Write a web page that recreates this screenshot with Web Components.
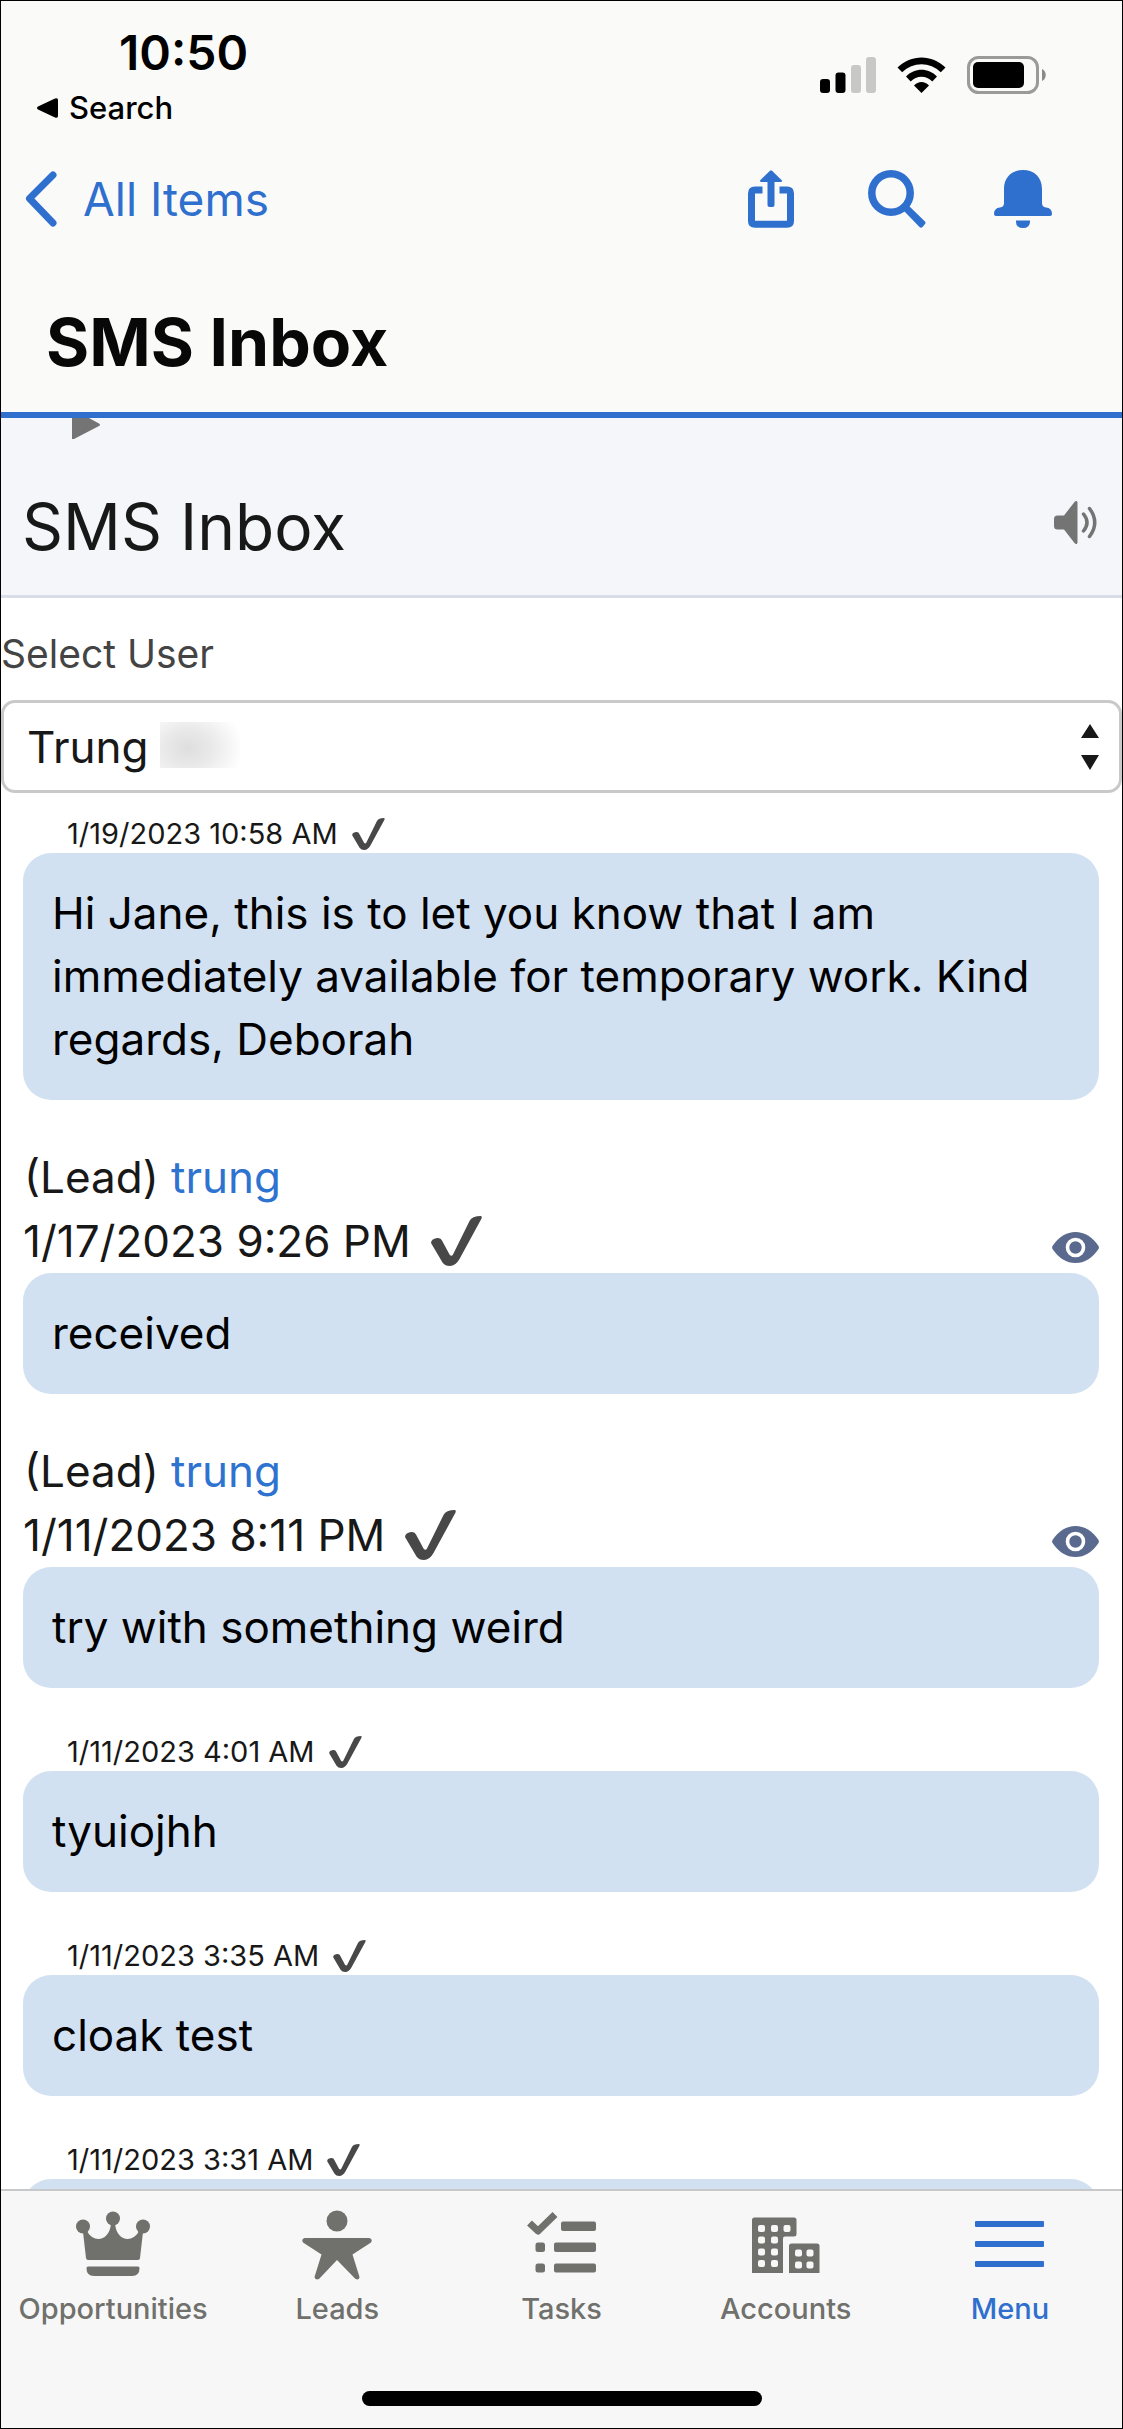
<!DOCTYPE html>
<html lang="en">
<head>
<meta charset="utf-8">
<meta name="viewport" content="width=device-width, initial-scale=1">
<title>SMS Inbox</title>
<style>
    body {
        margin: 0;
        font-family: Inter, "Liberation Sans", sans-serif;
        color: #181818;
    }
</style>
</head>
<body>
<phone-app>
    <app-header slot="header" heading="SMS Inbox" back="All Items" time="10:50"></app-header>

    <inbox-title>SMS Inbox</inbox-title>
    <user-picker label="Select User" value="Trung"></user-picker>

    <message-list>
        <sms-message date="1/19/2023 10:58 AM">Hi Jane, this is to let you know that I am immediately available for temporary work. Kind regards, Deborah</sms-message>
        <sms-message date="1/17/2023 9:26 PM" lead="trung">received</sms-message>
        <sms-message date="1/11/2023 8:11 PM" lead="trung">try with something weird</sms-message>
        <sms-message date="1/11/2023 4:01 AM">tyuiojhh</sms-message>
        <sms-message date="1/11/2023 3:35 AM">cloak test</sms-message>
        <sms-message date="1/11/2023 3:31 AM"></sms-message>
    </message-list>

    <tab-bar slot="footer">
        <tab-item icon="crown">Opportunities</tab-item>
        <tab-item icon="lead">Leads</tab-item>
        <tab-item icon="tasks">Tasks</tab-item>
        <tab-item icon="accounts">Accounts</tab-item>
        <tab-item icon="menu" active>Menu</tab-item>
    </tab-bar>
</phone-app>

<script>
const icons = {
    signal: `<svg width="56" height="36" viewBox="0 0 56 36">
        <rect y="22" width="10" height="14" rx="3"/><rect x="15.5" y="15.5" width="10" height="20.5" rx="3"/>
        <rect x="31" y="8" width="10" height="28" rx="3" fill="#c8c8c6"/><rect x="46" width="10" height="36" rx="3" fill="#c8c8c6"/>
    </svg>`,
    wifi: `<svg width="49" height="36" viewBox="0 0 49 36">
        <path d="M0.5 10.5C14-3 35-3 48.500 10.500L43.800 15.300C33 4.500 16 4.500 5.200 15.300Z"/>
        <path d="M9 19.500C17.500 10.500 31.500 10.500 40 19.500L35.300 24.500C29.500 18.200 19.500 18.200 13.700 24.500Z"/>
        <path d="M17 28.500C21 23.800 28 23.800 32 28.500L24.500 36Z"/>
    </svg>`,
    battery: `<svg width="79" height="38" viewBox="0 0 79 38">
        <rect x="1.500" y="1.500" width="69" height="35" rx="10" fill="none" stroke="#9a9a98" stroke-width="3"/>
        <rect x="6" y="6" width="51" height="26" rx="5"/><path d="M75 13C80 15 80 23 75 25Z" fill="#8a8a88"/>
    </svg>`,
    share: `<svg width="58" height="58" viewBox="0 0 58 58">
        <path d="M20.500 20H13Q9.500 20 9.500 23.500V51Q9.500 54.300 13 54.300H45Q48.500 54.300 48.500 51V23.500Q48.500 20 45 20H37.500" fill="none" stroke="currentColor" stroke-width="7" stroke-linecap="butt"/>
        <rect x="25.500" y="6" width="7" height="31" rx="2"/><path d="M28 .8Q29-.2 30 .8L40 10.500Q40.500 11.800 39 12H19Q17.500 11.800 18 10.500Z"/>
    </svg>`,
    search: `<svg width="58" height="58" viewBox="0 0 58 58">
        <circle cx="23" cy="23" r="19.200" fill="none" stroke="currentColor" stroke-width="7.500"/>
        <path d="M36 41L41 36L57 51.500Q58 53 57 54L54.500 57Q53 58.500 51.500 57Z"/>
    </svg>`,
    bell: `<svg width="58" height="58" viewBox="0 0 58 58">
        <path d="M10 19C10 7 18 0 29 0S48 7 48 19V33Q48 37 52 37.500Q58 38 58 44Q58 46 56 46H2Q0 46 0 44Q0 38 6 37.500Q10 37 10 33Z"/>
        <path d="M22 50.500H36Q36.500 58 29 58T22 50.500Z"/>
    </svg>`,
    back: `<svg width="32" height="56" viewBox="0 0 32 56">
        <path d="M28 4L4.500 27.500L28 52" fill="none" stroke="currentColor" stroke-width="7" stroke-linecap="round" stroke-linejoin="round"/>
    </svg>`,
    speaker: `<svg width="43" height="43" viewBox="0 0 43 43">
        <path d="M0 18Q0 14.500 3.500 14.500H10L20.500 1Q23.500-1.500 23.500 2V41Q23.500 44.500 20.500 42L10 28.500H3.500Q0 28.500 0 25Z"/>
        <path d="M29.500 13Q36.500 21.500 29.500 30M35.500 7.500Q46 21.500 35.500 35.500" fill="none" stroke="currentColor" stroke-width="3.500" stroke-linecap="round"/>
    </svg>`,
    eye: `<svg width="47" height="31" viewBox="0 0 47 31">
        <path d="M.5 17Q-.3 15.500.5 14Q10 0 23.500 0T46.500 14Q47.300 15.500 46.500 17Q37 31 23.500 31T.5 17Z"/>
        <circle cx="23.500" cy="15.500" r="8" fill="none" stroke="#fff" stroke-width="3.600"/>
    </svg>`,
    check: `<svg class="check" viewBox="0 0 51 50">
        <path d="M0 27Q0 23 6 22Q10 21.500 11 24.500L18.500 38.500Q20.500 41 22 38.500L38.500 5Q41 0 50 0Q51.500 1 50 3.500L28.500 43Q24.500 50 19 50Q14 50 11.500 46.500Z"/>
    </svg>`,
    crown: `<svg width="74" height="70" viewBox="0 0 74 70">
        <circle cx="7" cy="16.500" r="7"/><circle cx="37" cy="8.500" r="7"/><circle cx="67" cy="16.500" r="7"/>
        <path d="M7 22L11 21C17 33 33 32 35 14H39C41 32 57 33 63 21L67 22L64 48Q63.800 50 62 50H12Q10.300 50 10 48Z"/>
        <path d="M10.500 58Q10.500 56.500 12 56.500H62Q63.500 56.500 63.500 58Q63.500 66 56 66H18Q10.500 66 10.500 58Z"/>
    </svg>`,
    lead: `<svg width="70" height="70" viewBox="0 0 70 70">
        <circle cx="35" cy="11" r="10.500"/>
        <path d="M2.500 28H67.500Q71 29 69 32.500L50.500 44.500L57.500 67Q57.500 70.500 53.500 69L35 50L17 69Q13 70.500 12.500 67L19.500 44.500L1 32.500Q-1 29 2.500 28Z"/>
    </svg>`,
    tasks: `<svg width="70" height="70" viewBox="0 0 70 70">
        <path d="M3.500 13L12 21L29 4.500" fill="none" stroke="currentColor" stroke-width="7" stroke-linejoin="round"/>
        <rect x="35" y="11.500" width="35" height="9.500" rx="2"/><rect x="28" y="32.500" width="42" height="9.500" rx="2"/><rect x="28" y="53.500" width="42" height="9" rx="2"/>
        <rect x="9.500" y="32.500" width="9.500" height="9.500" rx="2.500"/><rect x="9.500" y="53.500" width="9.500" height="9" rx="2.500"/>
    </svg>`,
    accounts: `<svg width="68" height="70" viewBox="0 0 68 70">
        <path d="M0 63V10Q0 7.500 2.500 7.500H42Q44.500 7.500 44.500 10V24Q44.500 26.500 42 26.500H33Q31 26.500 31 28.500V63Z"/>
        <path d="M37 63V36Q37 33.500 39.500 33.500H65Q67.500 33.500 67.500 36V63Z"/>
        <g fill="#f7f7f7">
            <rect x="6" y="15" width="7" height="7" rx="2"/><rect x="19" y="15" width="7" height="7" rx="2"/><rect x="31.500" y="15" width="7" height="7" rx="2"/>
            <rect x="6" y="26.500" width="7" height="7" rx="2"/><rect x="19" y="26.500" width="7" height="7" rx="2"/>
            <rect x="6" y="38.500" width="7" height="7" rx="2"/><rect x="19" y="38.500" width="7" height="7" rx="2"/>
            <rect x="6" y="50" width="7" height="7" rx="2"/><rect x="19" y="50" width="7" height="7" rx="2"/>
            <rect x="43" y="39.500" width="7" height="7" rx="2"/><rect x="54.500" y="39.500" width="7" height="7" rx="2"/>
            <rect x="43" y="51.500" width="7" height="7" rx="2"/><rect x="54.500" y="51.500" width="7" height="7" rx="2"/>
        </g>
    </svg>`,
    menu: `<svg width="70" height="70" viewBox="0 0 70 70">
        <rect y="11" width="69" height="6" rx="1"/><rect y="31" width="69" height="6" rx="1"/><rect y="51" width="69" height="6" rx="1"/>
    </svg>`
};

// shared by every component
const base = `
    * { box-sizing: border-box; }
    svg { display: block; fill: currentColor; flex: none; }
    button { font: inherit; color: inherit; background: none; border: none; padding: 0; cursor: pointer; }
    a { color: inherit; text-decoration: none; }
`;

class BaseElement extends HTMLElement {
    constructor() {
        super();
        this.attachShadow({ mode: "open" });
    }

    connectedCallback() {
        this.shadowRoot.innerHTML = `<style>${base}${this.styles()}</style>${this.render()}`;
    }
}

class PhoneApp extends BaseElement {
    styles() {
        return `
            :host {
                box-sizing: border-box;
                display: flex;
                flex-direction: column;
                height: 100vh;
                border: 1px solid #000;
                background: #fff;
            }
            main { flex: 1; min-height: 0; overflow: hidden; }
        `;
    }

    render() {
        return `
            <slot name="header"></slot>
            <main><slot></slot></main>
            <slot name="footer"></slot>
        `;
    }
}

class AppHeader extends BaseElement {
    styles() {
        return `
            :host { display: block; background: #fafaf9; border-bottom: 6px solid #2f6fce; }
            .status {
                display: flex;
                justify-content: space-between;
                align-items: center;
                padding: 22px 76px 0 36px;
                color: #000;
            }
            .time { padding-left: 82px; font-size: 48px; font-weight: 600; line-height: 60px; }
            .return { display: flex; align-items: center; gap: 11px; margin-top: 7px; font-size: 31px; font-weight: 500; line-height: 36px; }
            .indicators { display: flex; align-items: center; gap: 21px; }
            nav {
                display: flex;
                justify-content: space-between;
                align-items: center;
                margin-top: 44px;
                padding: 0 70px 0 24px;
                color: #2f6fce;
            }
            .back { display: flex; align-items: center; gap: 26px; font-size: 46px; line-height: 58px; }
            .actions { display: flex; gap: 68px; }
            h1 { margin: 74px 0 0; padding: 0 45px 30px; font-size: 66px; font-weight: 700; line-height: 80px; color: #080808; }
        `;
    }

    render() {
        return `
            <div class="status">
                <div>
                    <div class="time">${this.getAttribute("time")}</div>
                    <a class="return" href="#search">
                        <svg width="21" height="20" viewBox="0 0 21 20"><path d="M1 8.500L18 .5Q21-.5 21 2V18Q21 20.500 18 19.500L1 11.500Q-1 10 1 8.500Z"/></svg>
                        Search
                    </a>
                </div>
                <div class="indicators">${icons.signal}${icons.wifi}${icons.battery}</div>
            </div>
            <nav>
                <a class="back" href="#items">${icons.back}${this.getAttribute("back")}</a>
                <div class="actions">
                    <button aria-label="Share">${icons.share}</button>
                    <button aria-label="Search">${icons.search}</button>
                    <button aria-label="Notifications">${icons.bell}</button>
                </div>
            </nav>
            <h1>${this.getAttribute("heading")}</h1>
        `;
    }
}

class InboxTitle extends BaseElement {
    styles() {
        return `
            :host { display: block; background: #f4f6fa; border-bottom: 3px solid #d9dde8; }
            .marker { margin-left: 71px; color: #747474; }
            .row { display: flex; justify-content: space-between; align-items: flex-start; padding: 48px 25px 28px 21px; }
            h2 { margin: 0; font-size: 64px; font-weight: 400; line-height: 80px; }
            button { padding: 14px 0; color: #747474; }
        `;
    }

    render() {
        return `
            <svg class="marker" width="28" height="21" viewBox="0 0 28 21"><path d="M0 0H17L27 5.500Q29 7 27 8L2 21H0Z"/></svg>
            <div class="row">
                <h2><slot></slot></h2>
                <button aria-label="Sound">${icons.speaker}</button>
            </div>
        `;
    }
}

class UserPicker extends BaseElement {
    styles() {
        return `
            :host { display: block; padding-top: 31px; }
            label { display: block; margin-bottom: 21px; font-size: 39px; line-height: 50px; color: #444; }
            .field { position: relative; }
            select {
                display: block;
                appearance: none;
                width: 100%;
                height: 93px;
                padding: 0 60px 0 23px;
                border: 3px solid #c9c9c9;
                border-radius: 14px;
                background: #fff;
                color: #181818;
                font: 400 44px Inter, "Liberation Sans", sans-serif;
            }
            .arrows { position: absolute; right: 23px; top: 50%; margin-top: -23px; pointer-events: none; }
            .masked {
                position: absolute;
                left: 159px;
                top: 22px;
                width: 80px;
                height: 46px;
                background: radial-gradient(ellipse 56px 44px at 28px 26px, #dedede, #eaeaea 45%, #fff);
                pointer-events: none;
            }
        `;
    }

    render() {
        return `
            <label for="user">${this.getAttribute("label")}</label>
            <div class="field">
                <select id="user"><option>${this.getAttribute("value")}</option></select>
                <span class="masked"></span>
                <svg class="arrows" width="18" height="46" viewBox="0 0 18 46"><path d="M9 0L18 14H0ZM0 31H18L9 46Z"/></svg>
            </div>
        `;
    }
}

class MessageList extends BaseElement {
    styles() {
        return `
            :host { display: flex; flex-direction: column; gap: 45px; padding: 22px 23px 0 22px; }
        `;
    }

    render() {
        return `<slot></slot>`;
    }
}

class SmsMessage extends BaseElement {
    styles() {
        return `
            :host { display: block; font-size: 44px; line-height: 64px; }
            .meta { display: flex; align-items: center; }
            .check { width: 51px; height: 50px; margin-left: 20px; color: #484848; }
            .view { margin-left: auto; padding-top: 12px; color: #5a6a8e; }
            .who { padding-left: 1px; }
            .who a { color: #2f73d0; }
            .sent { padding-left: 44px; font-size: 29px; line-height: 38px; }
            .sent .check { width: 33px; height: 32px; margin-left: 14px; }
            .bubble {
                min-height: 121px;
                padding: 29px;
                border-radius: 28px;
                background: #d2e1f1;
                line-height: 63px;
                color: #000;
            }
        `;
    }

    render() {
        const date = this.getAttribute("date");
        const lead = this.getAttribute("lead");

        const meta = lead
            ? `
                <div class="who">(Lead) <a href="#lead">${lead}</a></div>
                <div class="meta">${date}${icons.check}<button class="view" aria-label="View">${icons.eye}</button></div>
            `
            : `<div class="meta sent">${date}${icons.check}</div>`;

        return `${meta}<div class="bubble"><slot></slot></div>`;
    }
}

class TabBar extends BaseElement {
    styles() {
        return `
            :host { display: block; padding-bottom: 22px; border-top: 2px solid #c6c8ca; background: #f7f7f7; }
            nav { display: grid; grid-template-columns: repeat(5, 1fr); padding-top: 19px; }
            .home { width: 400px; height: 15px; margin: 62px auto 0; border-radius: 8px; background: #000; }
        `;
    }

    render() {
        return `
            <nav><slot></slot></nav>
            <div class="home"></div>
        `;
    }
}

class TabItem extends BaseElement {
    styles() {
        return `
            :host { display: block; color: #70706c; }
            :host([active]) { color: #2f6fce; }
            a { display: flex; flex-direction: column; align-items: center; gap: 9px; font-size: 29px; font-weight: 500; line-height: 40px; }
        `;
    }

    render() {
        return `<a href="#tab">${icons[this.getAttribute("icon")]}<span><slot></slot></span></a>`;
    }
}

customElements.define("phone-app", PhoneApp);
customElements.define("app-header", AppHeader);
customElements.define("inbox-title", InboxTitle);
customElements.define("user-picker", UserPicker);
customElements.define("message-list", MessageList);
customElements.define("sms-message", SmsMessage);
customElements.define("tab-bar", TabBar);
customElements.define("tab-item", TabItem);
</script>
</body>
</html>
